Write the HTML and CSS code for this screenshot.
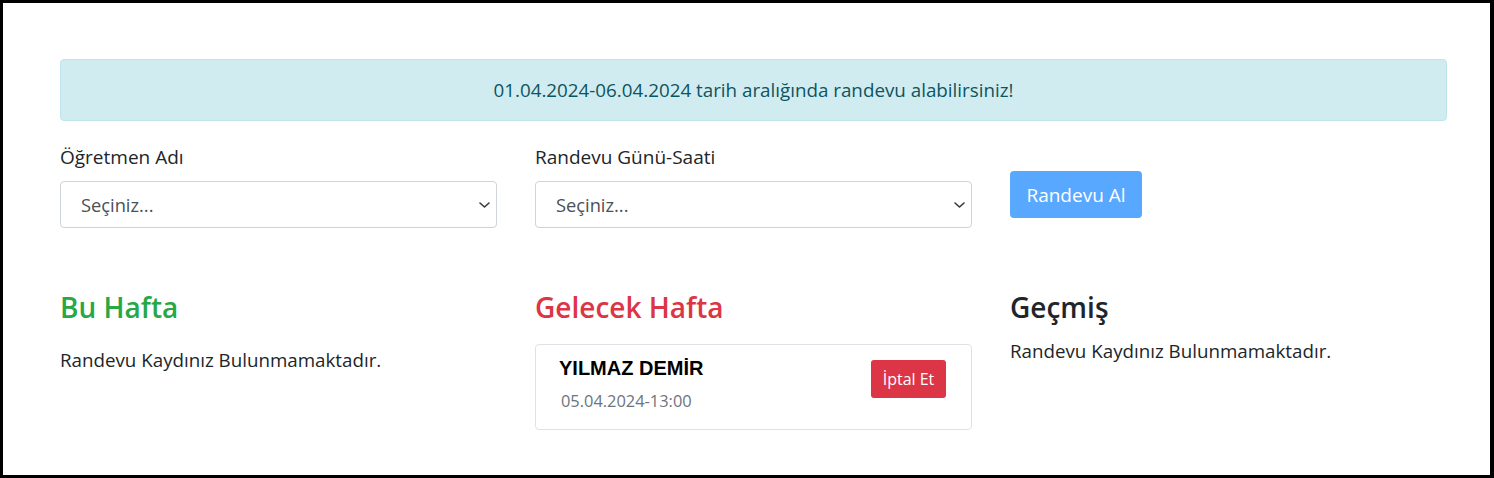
FILE: index.html
```html
<!DOCTYPE html>
<html lang="tr">
<head>
  <meta charset="UTF-8">
  <title>Randevu</title>
  <link rel="stylesheet" href="styles.css">
</head>
<body>

  <div class="frame">

    <div class="alert-info">
      01.04.2024-06.04.2024 tarih aralığında randevu alabilirsiniz!
    </div>

    <div class="form-row">
      <div class="field">
        <label class="field-label">Öğretmen Adı</label>
        <div class="select">
          <span>Seçiniz...</span>
          <svg class="chevron" viewBox="0 0 11 6" width="11" height="6">
            <path d="M1 1l4.5 4 4.5-4" fill="none" stroke="#343a40" stroke-width="1.6" stroke-linecap="round" stroke-linejoin="round"/>
          </svg>
        </div>
      </div>

      <div class="field">
        <label class="field-label">Randevu Günü-Saati</label>
        <div class="select">
          <span>Seçiniz...</span>
          <svg class="chevron" viewBox="0 0 11 6" width="11" height="6">
            <path d="M1 1l4.5 4 4.5-4" fill="none" stroke="#343a40" stroke-width="1.6" stroke-linecap="round" stroke-linejoin="round"/>
          </svg>
        </div>
      </div>

      <div class="field">
        <button class="btn-primary" disabled>Randevu Al</button>
      </div>
    </div>

    <div class="lists">
      <div class="list">
        <h3 class="list-title green">Bu Hafta</h3>
        <p class="empty">Randevu Kaydınız Bulunmamaktadır.</p>
      </div>

      <div class="list">
        <h3 class="list-title red">Gelecek Hafta</h3>
        <div class="card">
          <div class="card-info">
            <div class="teacher">YILMAZ DEMİR</div>
            <div class="date">05.04.2024-13:00</div>
          </div>
          <button class="btn-danger">İptal Et</button>
        </div>
      </div>

      <div class="list">
        <h3 class="list-title dark">Geçmiş</h3>
        <p class="empty past">Randevu Kaydınız Bulunmamaktadır.</p>
      </div>
    </div>

  </div>

</body>
</html>
```

FILE: styles.css
```css
html, body {
  margin: 0;
  padding: 0;
  background-color: white;
}

body {
  font-family: 'Open Sans', 'Noto Sans', sans-serif;
  color: #212529;
}

.frame {
  box-sizing: border-box;
  height: 478px;
  border: 3px solid #000;
  border-right-width: 4px;
  padding: 56px 43px 0 57px;
}

.alert-info {
  background-color: #d1ecf1;
  border: 1px solid #bee5eb;
  border-radius: 4px;
  color: #0c5460;
  text-align: center;
  font-size: 18.8px;
  line-height: 24px;
  padding: 18px 20px;
}

.form-row {
  display: grid;
  grid-template-columns: 437px 437px 437px;
  column-gap: 38px;
  margin-top: 24px;
}

.field-label {
  display: block;
  font-size: 19px;
  line-height: 24px;
  margin-bottom: 12px;
}

.select {
  box-sizing: border-box;
  height: 47px;
  border: 1px solid #ced4da;
  border-radius: 4px;
  display: flex;
  align-items: center;
  justify-content: space-between;
  padding: 0 6px 0 20px;
  color: #495057;
  font-size: 18.3px;
}

.chevron {
  display: block;
}

.btn-primary {
  margin-top: 26px;
  width: 132px;
  height: 47px;
  border: none;
  border-radius: 4px;
  background-color: #007bff;
  opacity: 0.65;
  color: white;
  font-family: inherit;
  font-size: 19px;
  padding: 0;
}

.lists {
  display: grid;
  grid-template-columns: 437px 437px 437px;
  column-gap: 38px;
  margin-top: 60px;
}

.list-title {
  margin: 0;
  font-size: 28px;
  line-height: 38px;
  font-weight: 600;
}

.green { color: #28a745; }
.red { color: #dc3545; }
.dark { color: #212529; }

.empty {
  margin: 22px 0 0;
  font-size: 18.75px;
  line-height: 24px;
}

.empty.past {
  margin-top: 13px;
}

.card {
  margin-top: 18px;
  border: 1px solid #dee2e6;
  border-radius: 4px;
  padding: 12px 25px 17px 23px;
  display: flex;
  justify-content: space-between;
  align-items: flex-start;
}

.teacher {
  font-family: 'Liberation Sans', Arial, sans-serif;
  font-weight: bold;
  font-size: 20px;
  line-height: 22px;
  color: #000;
}

.date {
  margin-top: 11px;
  margin-left: 2px;
  font-size: 16.4px;
  line-height: 22px;
  color: #6c757d;
}

.btn-danger {
  margin-top: 3px;
  width: 75px;
  height: 38px;
  border: none;
  border-radius: 3px;
  background-color: #dc3545;
  color: white;
  font-family: inherit;
  font-size: 16px;
  padding: 0;
}
```
